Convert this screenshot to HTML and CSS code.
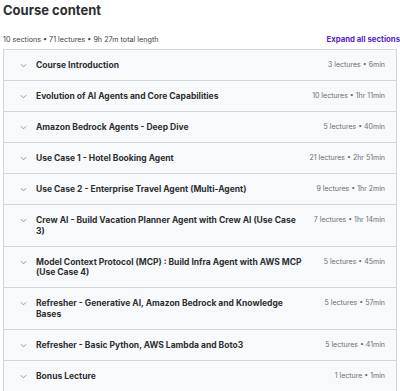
FILE: index.html
```html
<!DOCTYPE html>
<html>
<head>
    <meta charset="utf-8" />
    <title>Course content</title>
    <link rel="stylesheet" href="styles.css">
</head>
<body>
    <div class="curriculum">
      <h2 class="title">Course content</h2>
      <div class="summary">
        <span>10 sections • 71 lectures • 9h 27m total length</span>
        <span class="expand">Expand all sections</span>
      </div>

      <!-- 章节列表 -->
      <div class="sections">
        <div class="section">
          <svg class="chev" viewBox="0 0 8 5"><path d="M1 1l3 3 3-3" /></svg>
          <span class="name">Course Introduction</span>
          <span class="meta">3 lectures • 6min</span>
        </div>
        <div class="section">
          <svg class="chev" viewBox="0 0 8 5"><path d="M1 1l3 3 3-3" /></svg>
          <span class="name">Evolution of AI Agents and Core Capabilities</span>
          <span class="meta">10 lectures • 1hr 11min</span>
        </div>
        <div class="section">
          <svg class="chev" viewBox="0 0 8 5"><path d="M1 1l3 3 3-3" /></svg>
          <span class="name">Amazon Bedrock Agents - Deep Dive</span>
          <span class="meta">5 lectures • 40min</span>
        </div>
        <div class="section">
          <svg class="chev" viewBox="0 0 8 5"><path d="M1 1l3 3 3-3" /></svg>
          <span class="name">Use Case 1 - Hotel Booking Agent</span>
          <span class="meta">21 lectures • 2hr 51min</span>
        </div>
        <div class="section">
          <svg class="chev" viewBox="0 0 8 5"><path d="M1 1l3 3 3-3" /></svg>
          <span class="name">Use Case 2 - Enterprise Travel Agent (Multi-Agent)</span>
          <span class="meta">9 lectures • 1hr 2min</span>
        </div>
        <div class="section">
          <svg class="chev" viewBox="0 0 8 5"><path d="M1 1l3 3 3-3" /></svg>
          <span class="name">Crew AI - Build Vacation Planner Agent with Crew AI (Use Case 3)</span>
          <span class="meta">7 lectures • 1hr 14min</span>
        </div>
        <div class="section">
          <svg class="chev" viewBox="0 0 8 5"><path d="M1 1l3 3 3-3" /></svg>
          <span class="name">Model Context Protocol (MCP) : Build Infra Agent with AWS MCP (Use Case 4)</span>
          <span class="meta">5 lectures • 45min</span>
        </div>
        <div class="section">
          <svg class="chev" viewBox="0 0 8 5"><path d="M1 1l3 3 3-3" /></svg>
          <span class="name">Refresher - Generative AI, Amazon Bedrock and Knowledge Bases</span>
          <span class="meta">5 lectures • 57min</span>
        </div>
        <div class="section">
          <svg class="chev" viewBox="0 0 8 5"><path d="M1 1l3 3 3-3" /></svg>
          <span class="name">Refresher - Basic Python, AWS Lambda and Boto3</span>
          <span class="meta">5 lectures • 41min</span>
        </div>
        <div class="section">
          <svg class="chev" viewBox="0 0 8 5"><path d="M1 1l3 3 3-3" /></svg>
          <span class="name">Bonus Lecture</span>
          <span class="meta">1 lecture • 1min</span>
        </div>
      </div>
    </div>
</body>
</html>
```

FILE: styles.css
```css
* {
  margin: 0;
  padding: 0;
  box-sizing: border-box;
}
body {
  background: #fff;
  font-family: Inter, "Noto Sans", sans-serif;
  color: #2d2f31;
}
.curriculum {
  padding: 0 0 0 3px;
}
/* 标题 */
.title {
  font-size: 13px;
  font-weight: 700;
  line-height: 20px;
}
.summary {
  display: flex;
  justify-content: space-between;
  align-items: center;
  margin-top: 9px;
  height: 20px;
  font-size: 7.2px;
  color: #3e4143;
}
.expand {
  color: #5624d0;
  font-weight: 700;
  font-size: 7.8px;
}
/* 章节 */
.sections {
  width: 394px;
  border: 1px solid #d1d7dc;
  border-bottom: none;
}
.section {
  display: flex;
  align-items: flex-start;
  padding: 10px 11px 9.5px 16px;
  background: #f7f9fa;
  border-bottom: 1px solid #d1d7dc;
}
.chev {
  flex: none;
  width: 7px;
  height: 5px;
  margin-top: 3px;
  margin-right: 9px;
  fill: none;
  stroke: #7d8287;
  stroke-width: 0.9;
}
.name {
  flex: 1;
  font-size: 8.5px;
  font-weight: 700;
  line-height: 10.5px;
}
.meta {
  flex: none;
  margin-left: 18px;
  font-size: 7px;
  line-height: 10.5px;
  color: #6a6f73;
}
```
